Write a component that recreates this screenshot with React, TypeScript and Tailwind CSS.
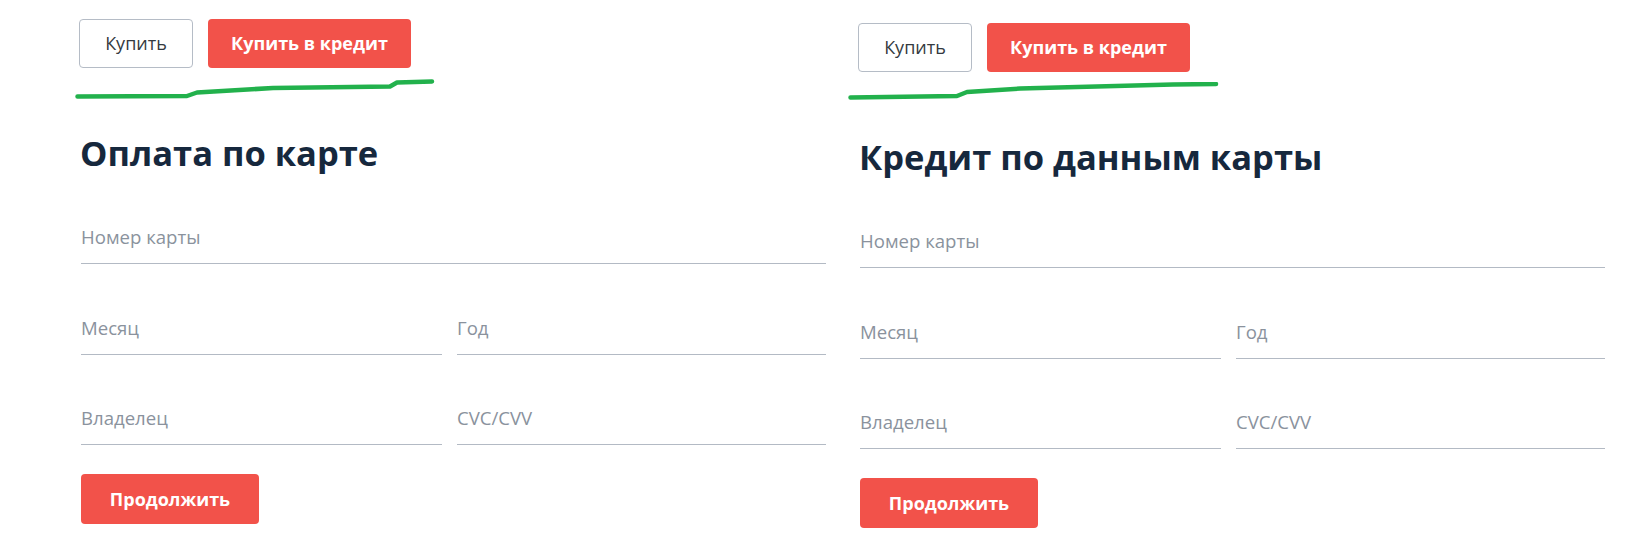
import React from 'react'

type PanelProps = {
  title: string
  stroke: string
  strokeShift: string
}

const font = { fontFamily: '"Open Sans", "Noto Sans", sans-serif' }

function Field({ label }: { label: string }) {
  return (
    <div className="border-b border-[#b3bac4] pb-[14px]">
      <span className="block text-[18.6px] leading-[24px] text-[#8a929d]">{label}</span>
    </div>
  )
}

function Panel({ title, stroke, strokeShift }: PanelProps) {
  return (
    <div className="flex w-[746px] flex-col">
      <div className="flex gap-[15px]">
        <button className="-ml-px h-[49px] w-[114px] rounded-[4px] border border-[#b5bcc6] bg-white text-[18px] text-[#343a40]">
          Купить
        </button>
        <button className="h-[49px] w-[203px] rounded-[4px] bg-[#f2524a] text-[18px] font-bold text-white">
          Купить в кредит
        </button>
      </div>

      <svg className={`mt-[10px] block ${strokeShift}`} width="380" height="22" viewBox="0 0 380 22" fill="none">
        <path d={stroke} stroke="#22b14c" strokeWidth="4.5" strokeLinecap="round" strokeLinejoin="round" />
      </svg>

      <h2 className="mt-[33px] text-[34.5px] leading-[40px] font-bold text-[#16283d]">{title}</h2>

      <div className="mt-[52px] pl-px">
        <Field label="Номер карты" />
        <div className="mt-[52px] grid grid-cols-[361px_369px] gap-x-[15px] gap-y-[51px]">
          <Field label="Месяц" />
          <Field label="Год" />
          <Field label="Владелец" />
          <Field label="CVC/CVV" />
        </div>
        <button className="mt-[29px] h-[50px] w-[178px] rounded-[4px] bg-[#f2524a] text-[18px] font-bold text-white">
          Продолжить
        </button>
      </div>
    </div>
  )
}

export default function App() {
  return (
    <div className="flex min-h-[543px] gap-[33px] bg-white pt-[19px] pl-[80px]" style={font}>
      <Panel
        title="Оплата по карте"
        stroke="M2.5 18.5 L112 18 L122 14.5 L198 10 L315 8.5 L322 4.5 L357 3.5"
        strokeShift="-ml-[5px]"
      />
      <div className="mt-[4px]">
        <Panel
          title="Кредит по данным карты"
          stroke="M2.5 15.5 L109 14 L119 10 L172 6.5 L325 2.5 L368 2"
          strokeShift="-ml-[11px]"
        />
      </div>
    </div>
  )
}
